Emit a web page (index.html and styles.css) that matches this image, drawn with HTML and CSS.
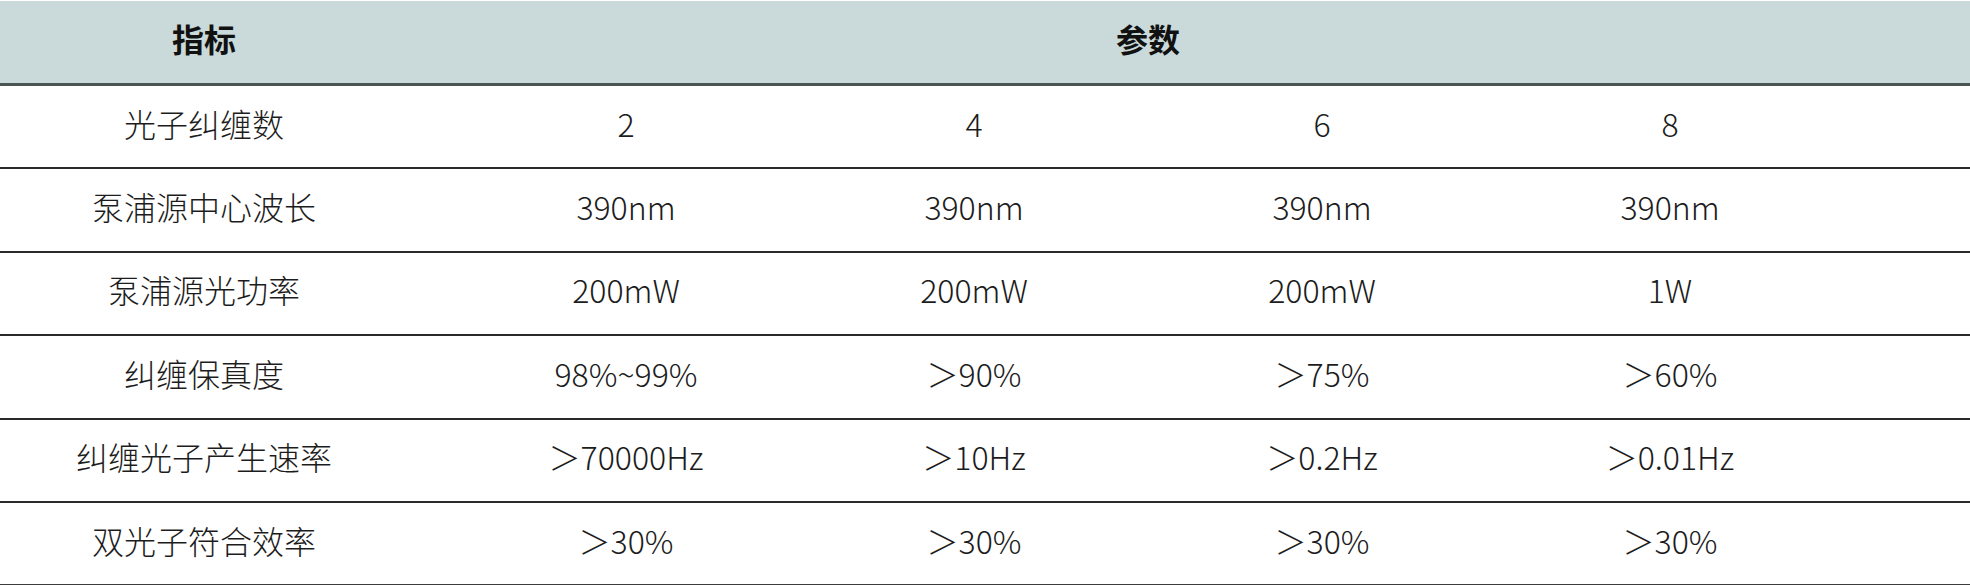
FILE: index.html
```html
<!DOCTYPE html>
<html lang="zh-CN">
<head>
<meta charset="utf-8">
<title>参数表</title>
<link rel="stylesheet" href="styles.css">
</head>
<body>
<table class="spec">
  <colgroup>
    <col class="c-label">
    <col class="c-val">
    <col class="c-val">
    <col class="c-val">
    <col class="c-val">
    <col class="c-fill">
  </colgroup>
  <thead>
    <tr>
      <th class="label">指标</th>
      <th colspan="4">参数</th>
      <th></th>
    </tr>
  </thead>
  <tbody>
    <tr><td class="label">光子纠缠数</td><td>2</td><td>4</td><td>6</td><td>8</td><td></td></tr>
    <tr><td class="label">泵浦源中心波长</td><td>390nm</td><td>390nm</td><td>390nm</td><td>390nm</td><td></td></tr>
    <tr><td class="label">泵浦源光功率</td><td>200mW</td><td>200mW</td><td>200mW</td><td>1W</td><td></td></tr>
    <tr><td class="label">纠缠保真度</td><td>98%~99%</td><td>＞90%</td><td>＞75%</td><td>＞60%</td><td></td></tr>
    <tr><td class="label">纠缠光子产生速率</td><td>＞70000Hz</td><td>＞10Hz</td><td>＞0.2Hz</td><td>＞0.01Hz</td><td></td></tr>
    <tr class="last"><td class="label">双光子符合效率</td><td>＞30%</td><td>＞30%</td><td>＞30%</td><td>＞30%</td><td></td></tr>
  </tbody>
</table>
</body>
</html>
```

FILE: styles.css
```css
html, body {
  margin: 0;
  padding: 0;
  background: #ffffff;
}

body {
  font-family: "Noto Sans CJK SC", "Noto Sans", sans-serif;
  color: #1c1c1c;
}

.spec {
  width: 1970px;
  margin-top: 1px;
  border-collapse: collapse;
  table-layout: fixed;
}

.c-label { width: 452px; }
.c-val { width: 348px; }
.c-fill { width: 126px; }

.spec th,
.spec td {
  padding: 0 0 8px 0;
  text-align: center;
  vertical-align: middle;
  font-size: 32px;
  line-height: 1;
}

.spec th.label,
.spec td.label {
  padding-right: 44px;
}

.spec thead th {
  background: #cad9da;
  height: 74px;
  font-weight: 700;
  color: #111111;
  border-bottom: 3px solid #4a5453;
}

.spec tbody td {
  height: 73.4px;
  font-weight: 300;
  border-bottom: 2px solid #2a2a2a;
}

.spec tbody tr.last td {
  border-bottom: 2px solid #3c3c3c;
}
```
